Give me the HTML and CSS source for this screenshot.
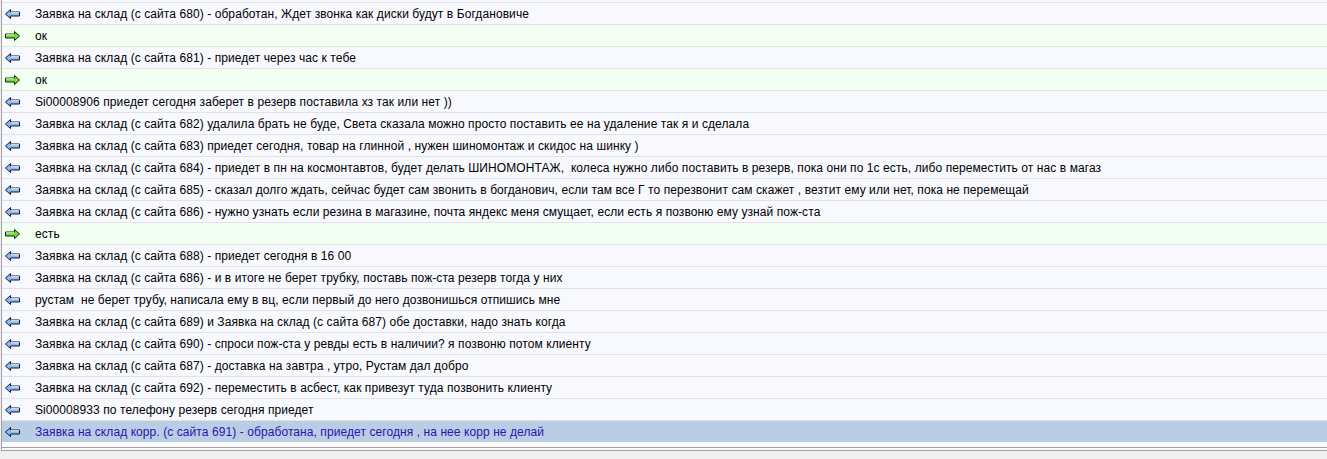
FILE: index.html
```html
<!DOCTYPE html>
<html>
<head>
<meta charset="utf-8">
<link rel="stylesheet" href="styles.css">
</head>
<body>
<svg width="0" height="0" class="defs">
  <defs>
    <symbol id="in" viewBox="0 0 15 10">
      <path d="M0.5 5 L5.5 0.5 L5.5 3 L14.5 3 L14.5 7 L5.5 7 L5.5 9.5 Z" fill="#8fb8ec" stroke="#0a1a3a" stroke-width="1" stroke-linejoin="miter"/>
      <path d="M6 3.8 H14" stroke="#ffffff" stroke-width="1"/>
    </symbol>
    <symbol id="out" viewBox="0 0 15 10">
      <path d="M14.5 5 L9.5 0.5 L9.5 3 L0.5 3 L0.5 7 L9.5 7 L9.5 9.5 Z" fill="#6fdc3c" stroke="#0f2a06" stroke-width="1" stroke-linejoin="miter"/>
      <path d="M1 3.8 H9" stroke="#d8ffc0" stroke-width="1"/>
    </symbol>
  </defs>
</svg>
<div class="list">
  <div class="row in"><svg class="ico"><use href="#in"/></svg><span class="txt">Заявка на склад (с сайта 680) - обработан, Ждет звонка как диски будут в Богдановиче</span></div>
  <div class="row out"><svg class="ico"><use href="#out"/></svg><span class="txt">ок</span></div>
  <div class="row in"><svg class="ico"><use href="#in"/></svg><span class="txt">Заявка на склад (с сайта 681) - приедет через час к тебе</span></div>
  <div class="row out"><svg class="ico"><use href="#out"/></svg><span class="txt">ок</span></div>
  <div class="row in"><svg class="ico"><use href="#in"/></svg><span class="txt">Si00008906 приедет сегодня заберет в резерв поставила хз так или нет ))</span></div>
  <div class="row in"><svg class="ico"><use href="#in"/></svg><span class="txt">Заявка на склад (с сайта 682) удалила брать не буде, Света сказала можно просто поставить ее на удаление так я и сделала</span></div>
  <div class="row in"><svg class="ico"><use href="#in"/></svg><span class="txt">Заявка на склад (с сайта 683) приедет сегодня, товар на глинной , нужен шиномонтаж и скидос на шинку )</span></div>
  <div class="row in"><svg class="ico"><use href="#in"/></svg><span class="txt">Заявка на склад (с сайта 684) - приедет в пн на космонтавтов, будет делать ШИНОМОНТАЖ,&nbsp; колеса нужно либо поставить в резерв, пока они по 1с есть, либо переместить от нас в магаз</span></div>
  <div class="row in"><svg class="ico"><use href="#in"/></svg><span class="txt">Заявка на склад (с сайта 685) - сказал долго ждать, сейчас будет сам звонить в богданович, если там все Г то перезвонит сам скажет , везтит ему или нет, пока не перемещай</span></div>
  <div class="row in"><svg class="ico"><use href="#in"/></svg><span class="txt">Заявка на склад (с сайта 686) - нужно узнать если резина в магазине, почта яндекс меня смущает, если есть я позвоню ему узнай пож-ста</span></div>
  <div class="row out"><svg class="ico"><use href="#out"/></svg><span class="txt">есть</span></div>
  <div class="row in"><svg class="ico"><use href="#in"/></svg><span class="txt">Заявка на склад (с сайта 688) - приедет сегодня в 16 00</span></div>
  <div class="row in"><svg class="ico"><use href="#in"/></svg><span class="txt">Заявка на склад (с сайта 686) - и в итоге не берет трубку, поставь пож-ста резерв тогда у них</span></div>
  <div class="row in"><svg class="ico"><use href="#in"/></svg><span class="txt">рустам&nbsp; не берет трубу, написала ему в вц, если первый до него дозвонишься отпишись мне</span></div>
  <div class="row in"><svg class="ico"><use href="#in"/></svg><span class="txt">Заявка на склад (с сайта 689) и Заявка на склад (с сайта 687) обе доставки, надо знать когда</span></div>
  <div class="row in"><svg class="ico"><use href="#in"/></svg><span class="txt">Заявка на склад (с сайта 690) - спроси пож-ста у ревды есть в наличии? я позвоню потом клиенту</span></div>
  <div class="row in"><svg class="ico"><use href="#in"/></svg><span class="txt">Заявка на склад (с сайта 687) - доставка на завтра , утро, Рустам дал добро</span></div>
  <div class="row in"><svg class="ico"><use href="#in"/></svg><span class="txt">Заявка на склад (с сайта 692) - переместить в асбест, как привезут туда позвонить клиенту</span></div>
  <div class="row in"><svg class="ico"><use href="#in"/></svg><span class="txt">Si00008933 по телефону резерв сегодня приедет</span></div>
  <div class="row in sel"><svg class="ico"><use href="#in"/></svg><span class="txt">Заявка на склад корр. (с сайта 691) - обработана, приедет сегодня , на нее корр не делай</span></div>
  <div class="tail"></div>
</div>
<div class="hscroll"></div>
</body>
</html>
```

FILE: styles.css
```css
html, body {
  margin: 0;
  padding: 0;
}
body {
  background: #f0f0f0;
  width: 1327px;
  height: 459px;
  overflow: hidden;
  font-family: "Liberation Sans", Arial, sans-serif;
  font-size: 12px;
  color: #000;
}
.defs {
  position: absolute;
}
.list {
  margin-left: 1px;
  border-left: 1px solid #a0a0a0;
  padding-top: 2px;
  background: #f8f9fe;
}
.row {
  display: flex;
  align-items: center;
  height: 21px;
  border-top: 1px solid #e2e2e2;
  box-sizing: content-box;
}
.row.in {
  background: #f8f9fe;
}
.row.out {
  background: #f4fff3;
}
.row.sel {
  background: #b9cde5;
  color: #2a14b0;
  border-top-color: #e2e2e2;
}
.ico {
  width: 15px;
  height: 10px;
  margin-left: 3px;
  flex: none;
}
.txt {
  margin-left: 15px;
  white-space: nowrap;
  letter-spacing: 0.08px;
}
.tail {
  height: 5px;
  background: #fafafa;
}
.hscroll {
  margin-left: 1px;
  height: 2px;
  border: 1px solid #a0a0a0;
  border-right: none;
  background: #fbfbfb;
}
```
